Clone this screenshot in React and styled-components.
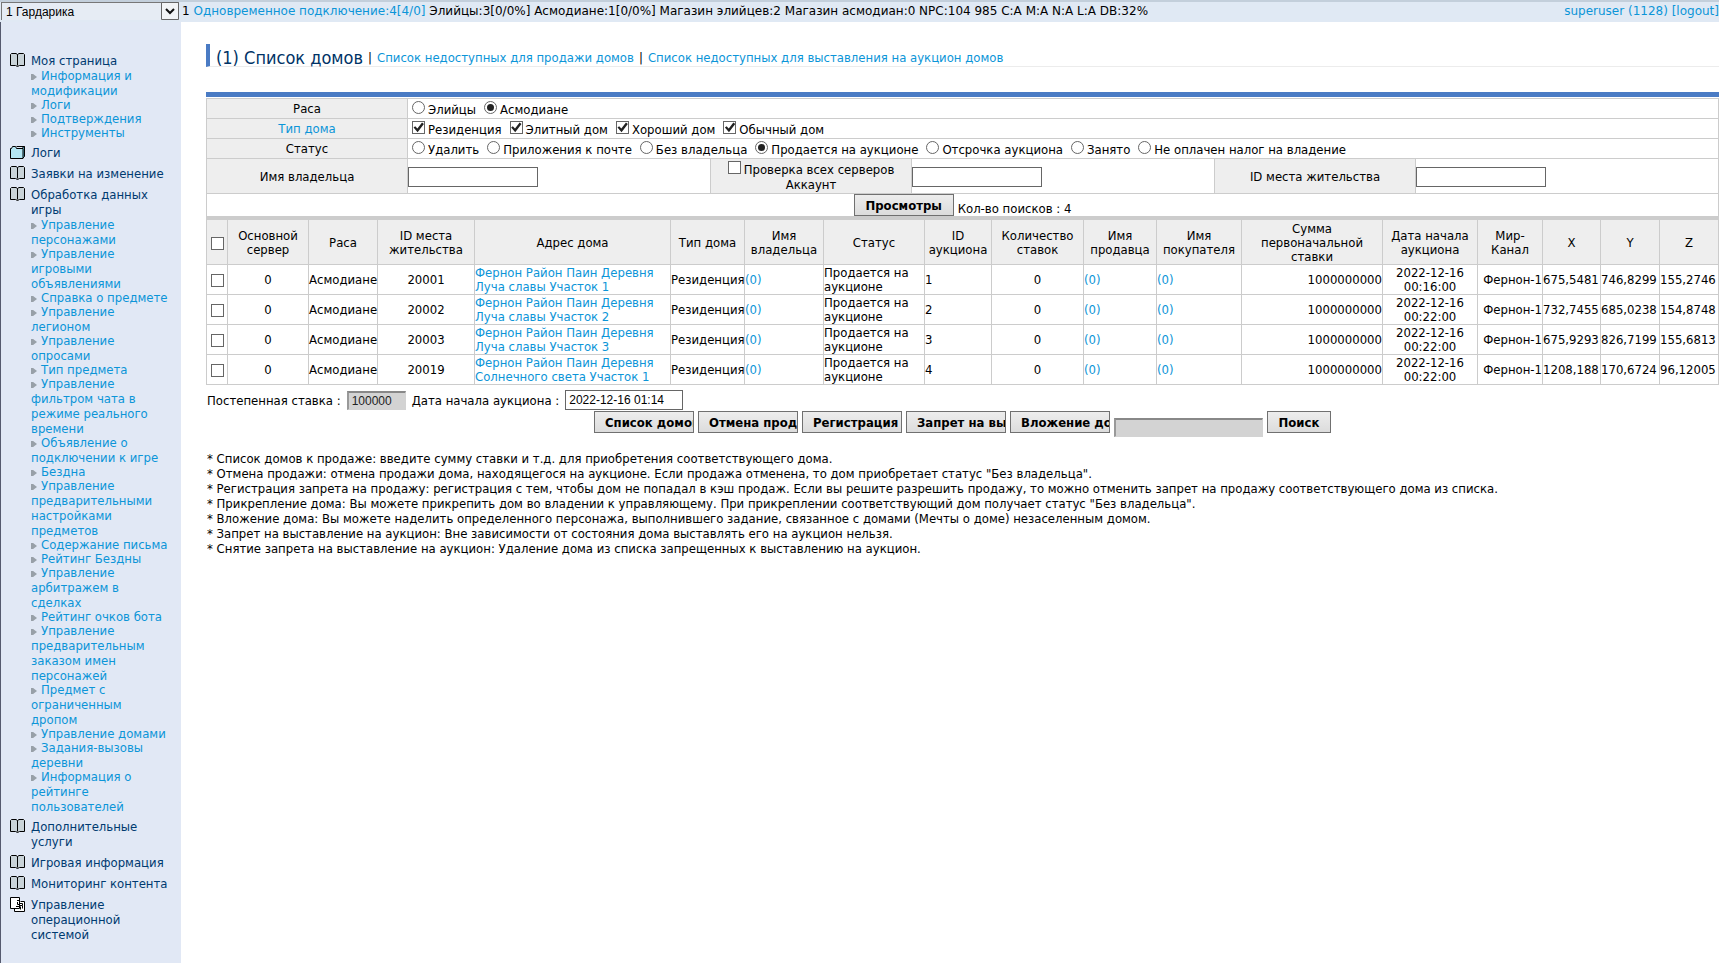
import React from "react";
import styled, { createGlobalStyle } from "styled-components";

const menu = [
  {
    title: "Моя страница",
    icon: "book",
    items: ["Информация и модификации", "Логи", "Подтверждения", "Инструменты"],
  },
  { title: "Логи", icon: "folder" },
  { title: "Заявки на изменение", icon: "book" },
  {
    title: "Обработка данных игры",
    icon: "book",
    items: [
      "Управление персонажами",
      "Управление игровыми объявлениями",
      "Справка о предмете",
      "Управление легионом",
      "Управление опросами",
      "Тип предмета",
      "Управление фильтром чата в режиме реального времени",
      "Объявление о подключении к игре",
      "Бездна",
      "Управление предварительными настройками предметов",
      "Содержание письма",
      "Рейтинг Бездны",
      "Управление арбитражем в сделках",
      "Рейтинг очков бота",
      "Управление предварительным заказом имен персонажей",
      "Предмет с ограниченным дропом",
      "Управление домами",
      "Задания-вызовы деревни",
      "Информация о рейтинге пользователей",
    ],
  },
  { title: "Дополнительные услуги", icon: "book" },
  { title: "Игровая информация", icon: "book" },
  { title: "Мониторинг контента", icon: "book" },
  { title: "Управление операционной системой", icon: "windows" },
];

const races = ["Элийцы", "Асмодиане"];
const houseTypes = ["Резиденция", "Элитный дом", "Хороший дом", "Обычный дом"];
const statuses = [
  "Удалить",
  "Приложения к почте",
  "Без владельца",
  "Продается на аукционе",
  "Отсрочка аукциона",
  "Занято",
  "Не оплачен налог на владение",
];

const columns = [
  { title: "Основной сервер", width: 81 },
  { title: "Раса", width: 69 },
  { title: "ID места жительства", width: 97 },
  { title: "Адрес дома", width: 196 },
  { title: "Тип дома", width: 74 },
  { title: "Имя владельца", width: 79 },
  { title: "Статус", width: 101 },
  { title: "ID аукциона", width: 67 },
  { title: "Количество ставок", width: 92 },
  { title: "Имя продавца", width: 73 },
  { title: "Имя покупателя", width: 85 },
  { title: "Сумма первоначальной ставки", width: 141 },
  { title: "Дата начала аукциона", width: 95 },
  { title: "Мир-Канал", width: 65 },
  { title: "X", width: 58 },
  { title: "Y", width: 59 },
  { title: "Z", width: 59 },
];

const houses = [
  { id: "20001", street: "Луча славы Участок 1", auction: 1, time: "00:16:00", x: "675,5481", y: "746,8299", z: "155,2746" },
  { id: "20002", street: "Луча славы Участок 2", auction: 2, time: "00:22:00", x: "732,7455", y: "685,0238", z: "154,8748" },
  { id: "20003", street: "Луча славы Участок 3", auction: 3, time: "00:22:00", x: "675,9293", y: "826,7199", z: "155,6813" },
  { id: "20019", street: "Солнечного света Участок 1", auction: 4, time: "00:22:00", x: "1208,188", y: "170,6724", z: "96,12005" },
];

const actions = [
  "Список домов",
  "Отмена продажи",
  "Регистрация",
  "Запрет на выставление",
  "Вложение дома",
];

const notes = [
  "Список домов к продаже: введите сумму ставки и т.д. для приобретения соответствующего дома.",
  'Отмена продажи: отмена продажи дома, находящегося на аукционе. Если продажа отменена, то дом приобретает статус "Без владельца".',
  "Регистрация запрета на продажу: регистрация с тем, чтобы дом не попадал в кэш продаж. Если вы решите разрешить продажу, то можно отменить запрет на продажу соответствующего дома из списка.",
  'Прикрепление дома: Вы можете прикрепить дом во владении к управляющему. При прикреплении соответствующий дом получает статус "Без владельца".',
  "Вложение дома: Вы можете наделить определенного персонажа, выполнившего задание, связанное с домами (Мечты о доме) незаселенным домом.",
  "Запрет на выставление на аукцион: Вне зависимости от состояния дома выставлять его на аукцион нельзя.",
  "Снятие запрета на выставление на аукцион: Удаление дома из списка запрещенных к выставлению на аукцион.",
];

const MenuIcon = ({ type }) => {
  if (type === "folder") {
    return (
      <Icon viewBox="0 0 16 15" aria-hidden="true">
        <path d="M12.5 2.5l2-1v10l-2 2" fill="#5fb3c9" stroke="#000" />
        <path d="M.5 13.5v-10h1l1-2h3l1 2h6.500v10z" fill="#b4e6f3" stroke="#000" />
        <path d="M6.500 1.500h8" stroke="#000" />
      </Icon>
    );
  }
  if (type === "windows") {
    return (
      <Icon viewBox="0 0 16 15" aria-hidden="true">
        <path d="M4.500 11.500v3h10v-10h-4" fill="#fff" stroke="#000" />
        <path d="M.5.500h9v11h-9z" fill="#fff" stroke="#000" />
        <path d="M7 3.500h2M7.500 5v2.500h2M10 6.500h2.500v2H10M6 9.500h4M10.500 9.500v3M12.500 9v2.500" fill="none" stroke="#000" />
      </Icon>
    );
  }
  return (
    <Icon viewBox="0 0 16 15" aria-hidden="true">
      <path d="M1.500.500h4.500l1.500 1 1.500-1h4.500l1 1v11h-5l-2 1-2-1h-5v-11z" fill="#c9d3d8" stroke="#000" />
      <path d="M7.500 1.500v11" stroke="#000" />
    </Icon>
  );
};

const Option = ({ type, name, text, checked }) => (
  <OptionLabel>
    <Tick type={type} name={name} defaultChecked={checked} />
    {text}
  </OptionLabel>
);

const Sidebar = () => (
  <Side>
    {menu.map((group) => (
      <Group key={group.title}>
        <MenuIcon type={group.icon} />
        <div>
          <GroupLink href="#">{group.title}</GroupLink>
          {group.items && (
            <ul>
              {group.items.map((item) => (
                <SubItem key={item}>
                  <a href="#">{item}</a>
                </SubItem>
              ))}
            </ul>
          )}
        </div>
      </Group>
    ))}
  </Side>
);

const Filters = () => (
  <Table>
    <colgroup>
      <Col $w={201} />
      <Col $w={303} />
      <Col $w={201} />
      <Col $w={303} />
      <Col $w={201} />
      <Col $w={303} />
    </colgroup>
    <tbody>
      <Row $h={20}>
        <Th>Раса</Th>
        <Td colSpan={5}>
          <Options>
            {races.map((text, i) => (
              <Option key={text} type="radio" name="race" text={text} checked={i === 1} />
            ))}
          </Options>
        </Td>
      </Row>
      <Row $h={20}>
        <Th>
          <a href="#">Тип дома</a>
        </Th>
        <Td colSpan={5}>
          <Options>
            {houseTypes.map((text) => (
              <Option key={text} type="checkbox" name="houseType" text={text} checked />
            ))}
          </Options>
        </Td>
      </Row>
      <Row $h={20}>
        <Th>Статус</Th>
        <Td colSpan={5}>
          <Options>
            {statuses.map((text, i) => (
              <Option key={text} type="radio" name="status" text={text} checked={i === 3} />
            ))}
          </Options>
        </Td>
      </Row>
      <Row $h={35}>
        <Th>
          <label htmlFor="owner">Имя владельца</label>
        </Th>
        <Td>
          <TextInput id="owner" $w={130} />
        </Td>
        <Th>
          <Option type="checkbox" name="allServers" text="Проверка всех серверов" />
          <br />
          <label htmlFor="account">Аккаунт</label>
        </Th>
        <Td>
          <TextInput id="account" $w={130} />
        </Td>
        <Th>
          <label htmlFor="houseId">ID места жительства</label>
        </Th>
        <Td>
          <TextInput id="houseId" $w={130} />
        </Td>
      </Row>
      <Row $h={23}>
        <Td colSpan={6} $flush>
          <SearchLine>
            <Button $w={100}>Просмотры</Button>
            <span>Кол-во поисков : 4</span>
          </SearchLine>
        </Td>
      </Row>
    </tbody>
  </Table>
);

const Houses = () => (
  <Table>
    <colgroup>
      <Col $w={21} />
      {columns.map((c) => (
        <Col key={c.title} $w={c.width} />
      ))}
    </colgroup>
    <thead>
      <Row $h={45}>
        <Th>
          <Tick type="checkbox" aria-label="Все" />
        </Th>
        {columns.map((c) => (
          <Th key={c.title}>{c.title}</Th>
        ))}
      </Row>
    </thead>
    <tbody>
      {houses.map((h) => (
        <Row key={h.id} $h={30}>
          <Td $align="center">
            <Tick type="checkbox" aria-label={h.id} />
          </Td>
          <Td $align="center">0</Td>
          <Td $align="center" $nowrap>Асмодиане</Td>
          <Td $align="center">{h.id}</Td>
          <Td>
            <a href="#">
              Фернон Район Паин Деревня
              <br />
              {h.street}
            </a>
          </Td>
          <Td $nowrap>Резиденция</Td>
          <Td><a href="#">(0)</a></Td>
          <Td>Продается на аукционе</Td>
          <Td>{h.auction}</Td>
          <Td $align="center">0</Td>
          <Td><a href="#">(0)</a></Td>
          <Td><a href="#">(0)</a></Td>
          <Td $align="right">1000000000</Td>
          <Td $align="center">2022-12-16 {h.time}</Td>
          <Td $align="right" $nowrap>Фернон-1</Td>
          <Td $nowrap>{h.x}</Td>
          <Td $nowrap>{h.y}</Td>
          <Td $nowrap>{h.z}</Td>
        </Row>
      ))}
    </tbody>
  </Table>
);

const App = () => (
  <>
    <GlobalStyle />
    <Page>
      <TopBar>
        <SelectBox>
          <ServerSelect aria-label="Сервер" defaultValue="1">
            <option value="1">1 Гардарика</option>
          </ServerSelect>
          <SelectArrow viewBox="0 0 18 18" aria-hidden="true">
            <path d="M.5.500h17v17H.5z" fill="#f2f4f6" stroke="#666" />
            <path d="M5 7l4 4 4-4" fill="none" stroke="#111" strokeWidth="2" />
          </SelectArrow>
        </SelectBox>
        <Stats>
          1 <a href="#">Одновременное подключение:4[4/0]</a> Элийцы:3[0/0%] Асмодиане:1[0/0%] Магазин
          элийцев:2 Магазин асмодиан:0 NPC:104 985 C:A M:A N:A L:A DB:32%
        </Stats>
        <div>
          <a href="#">superuser (1128)</a> <a href="#">[logout]</a>
        </div>
      </TopBar>
      <Body>
        <Sidebar />
        <Main>
          <TitleBar>
            <Title>(1) Список домов</Title>
            <span>|</span>
            <a href="#">Список недоступных для продажи домов</a>
            <span>|</span>
            <a href="#">Список недоступных для выставления на аукцион домов</a>
          </TitleBar>
          <BlueRule />
          <Filters />
          <GrayRule />
          <Houses />
          <BidLine>
            <label htmlFor="step">Постепенная ставка :</label>
            <TextInput id="step" $w={59} defaultValue="100000" disabled />
            <label htmlFor="start">Дата начала аукциона :</label>
            <TextInput id="start" $w={118} defaultValue="2022-12-16 01:14" />
          </BidLine>
          <Actions>
            {actions.map((text) => (
              <Button key={text} $w={100} $clip>
                {text}
              </Button>
            ))}
            <TextInput $w={149} $low aria-label="Персонаж" disabled />
            <Button $w={64}>Поиск</Button>
          </Actions>
          <Notes>
            {notes.map((text) => (
              <li key={text}>* {text}</li>
            ))}
          </Notes>
        </Main>
      </Body>
    </Page>
  </>
);

const GlobalStyle = createGlobalStyle`
  * {
    box-sizing: border-box;
  }

  body {
    margin: 0;
    background: #fff;
    color: #000;
    font-family: "DejaVu Sans Condensed", "DejaVu Sans", sans-serif;
    font-size: 13px;
    line-height: 15px;
  }

  a {
    color: #0c95d8;
    text-decoration: none;
  }

  ul {
    list-style: none;
    margin: 0;
    padding: 0;
  }
`;

const Page = styled.div`
  min-height: 100vh;
  display: flex;
  flex-direction: column;
`;

const TopBar = styled.header`
  display: flex;
  align-items: center;
  height: 22px;
  padding-bottom: 2px;
  border-top: 2px solid #c3cfdb;
  background: #e0e9f4;
  font-family: "DejaVu Sans", sans-serif;
  font-size: 12px;
  white-space: nowrap;
`;

const SelectBox = styled.div`
  position: relative;
  flex: none;
  width: 178px;
  height: 18px;
  margin: 0 3px 0 1px;
`;

const ServerSelect = styled.select`
  appearance: none;
  display: block;
  width: 100%;
  height: 18px;
  padding: 0 20px 0 4px;
  border: 1px solid #777;
  border-width: 1px 0 0 1px;
  border-radius: 0;
  background: #e6ecf4;
  color: #000;
  font: 12px "Liberation Sans", sans-serif;
`;

const SelectArrow = styled.svg`
  position: absolute;
  top: 0;
  right: 0;
  width: 18px;
  height: 18px;
  pointer-events: none;
`;

const Stats = styled.div`
  flex: 1;
`;

const Body = styled.div`
  flex: 1;
  display: flex;
`;

const Side = styled.nav`
  flex: none;
  width: 181px;
  display: flex;
  flex-direction: column;
  gap: 6px;
  padding: 31px 10px 10px 9px;
  border-left: 1px solid #555a6e;
  background: #e1e8f5;
`;

const Group = styled.div`
  display: flex;
  gap: 5px;
`;

const Icon = styled.svg`
  flex: none;
  width: 16px;
  height: 15px;
`;

const GroupLink = styled.a`
  display: block;
  color: #003a70;
`;

const SubItem = styled.li`
  margin-bottom: -1px;

  &::before {
    content: "";
    display: inline-block;
    width: 6px;
    height: 6px;
    margin-right: 4px;
    background: #98a0a8;
    clip-path: polygon(0 0, 35% 0, 100% 50%, 35% 100%, 0 100%);
  }
`;

const Main = styled.main`
  flex: 1;
  min-width: 0;
  padding: 22px 0 22px 25px;
`;

const TitleBar = styled.div`
  display: flex;
  align-items: center;
  gap: 5px;
  height: 23px;
  padding: 4px 0 0 6px;
  border-left: 4px solid #4a7bc4;
  border-bottom: 1px solid #ececec;
`;

const Title = styled.h1`
  margin: 0;
  color: #003366;
  font-size: 18px;
  font-weight: 400;
`;

const BlueRule = styled.div`
  height: 5px;
  margin: 25px 0 1px;
  background: #4a7bc4;
`;

const GrayRule = styled.div`
  height: 2px;
  background: #ccc;
`;

const Table = styled.table`
  width: 100%;
  table-layout: fixed;
  border-collapse: collapse;
`;

const Col = styled.col`
  width: ${(p) => p.$w}px;
`;

const Row = styled.tr`
  height: ${(p) => p.$h}px;
`;

const Th = styled.th`
  padding: 1px 0 0;
  border: 1px solid #ccc;
  background: #eee;
  font-weight: 400;
  line-height: 14px;
`;

const Td = styled.td`
  padding: ${(p) => (p.$flush ? "0" : "1px 0 0")};
  border: 1px solid #ccc;
  line-height: 14px;
  text-align: ${(p) => p.$align || "left"};
  white-space: ${(p) => (p.$nowrap ? "nowrap" : "normal")};
`;

const Options = styled.div`
  display: flex;
  gap: 8px;
  padding: 1px 0 0 4px;
`;

const OptionLabel = styled.label`
  display: inline-flex;
  align-items: center;
  gap: 3px;
  white-space: nowrap;
`;

const Tick = styled.input`
  appearance: none;
  display: inline-grid;
  place-items: center;
  width: 13px;
  height: 13px;
  margin: 0;
  border: 1px solid #666;
  border-radius: ${(p) => (p.type === "radio" ? "50%" : "0")};
  background: #fff;
  vertical-align: middle;

  ${OptionLabel} & {
    margin-bottom: 4px;
  }

  &:checked::after {
    content: "";
    width: ${(p) => (p.type === "radio" ? "7px" : "11px")};
    height: ${(p) => (p.type === "radio" ? "7px" : "11px")};
    border-radius: ${(p) => (p.type === "radio" ? "50%" : "0")};
    background: #222;
    clip-path: ${(p) =>
      p.type === "radio" ? "none" : "polygon(5% 50%, 20% 38%, 40% 60%, 82% 4%, 99% 18%, 42% 94%)"};
  }
`;

const TextInput = styled.input`
  display: block;
  width: ${(p) => p.$w}px;
  height: 20px;
  margin: ${(p) => (p.$low ? "7px" : "0")} 0 0;
  padding: 0 3px;
  border: 1px solid #666;
  border-radius: 0;
  background: #fff;
  color: #000;
  font: 12px "Liberation Sans", sans-serif;

  &:disabled {
    height: 19px;
    border: 1px solid #d3d3d3;
    border-top: 2px solid #888;
    border-left: 2px solid #999;
    background: #d3d3d3;
    color: #222;
  }
`;

const Button = styled.button`
  width: ${(p) => p.$w}px;
  height: 22px;
  padding: ${(p) => (p.$clip ? "0 0 0 10px" : "0")};
  border: 1px solid #707070;
  border-radius: 0;
  background: linear-gradient(#ededed, #dcdcdc);
  color: #000;
  font: bold 13px "DejaVu Sans Condensed", "DejaVu Sans", sans-serif;
  text-align: ${(p) => (p.$clip ? "left" : "center")};
  white-space: nowrap;
  overflow: hidden;
`;

const SearchLine = styled.div`
  display: flex;
  justify-content: center;
  gap: 4px;

  span {
    padding-top: 8px;
  }
`;

const BidLine = styled.div`
  display: flex;
  align-items: center;
  gap: 6px;
  padding: 5px 0 0 1px;
`;

const Actions = styled.div`
  display: flex;
  align-items: flex-start;
  justify-content: center;
  gap: 4px;
  margin-top: 1px;
`;

const Notes = styled.ul`
  margin-top: 14px;
  padding-left: 1px;
`;

export default App;
